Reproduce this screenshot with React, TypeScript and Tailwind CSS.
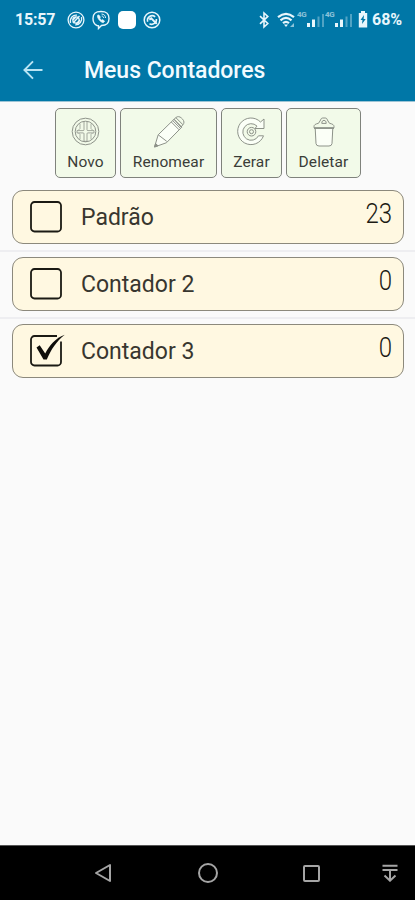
import React from 'react';

function StatusBar() {
  return (
    <div className="flex h-[39px] items-center pl-[15px] pr-[13px] text-[#e8f6fc]">
      <span className="w-[52px] shrink-0 whitespace-nowrap text-[16px] font-bold tracking-[-0.2px]">15:57</span>
      <svg className="h-[18px] w-[18px] shrink-0" viewBox="0 0 18 18" fill="none" stroke="currentColor" strokeWidth="1.3">
        <circle cx="9" cy="9" r="7.9" />
        <path d="M3.5 12C2.5 7 6 3.5 10 4.2M14.5 6c1 4-2 8-6.3 7.8M6 12l6.5-7M6 9l3-3M9 13l4-4" />
        <circle cx="9" cy="9" r="3.2" />
      </svg>
      <svg className="ml-[7px] h-[20px] w-[18px] shrink-0" viewBox="0 0 18 20" fill="none" stroke="currentColor" strokeWidth="1.4">
        <path d="M5 15.5C1.5 14 1 12 1 8.5C1 3.5 3 1.5 9 1.5s8 2 8 7s-2 7-7.5 7L6.5 18.5V15.8Z" />
        <path d="M5.6 5.2c-1 2 2.2 6.7 5.6 7.6l1.5-1.5-2-1.7-1.2.7-1.7-2 .6-1.2-1.5-2.2Z" fill="currentColor" strokeWidth=".6" />
        <path d="M9.5 4c2.6.1 4 1.7 4 4M9.7 6c1.3.1 1.9.8 1.9 2" strokeWidth="1" />
      </svg>
      <div className="ml-[8px] h-[18px] w-[18px] shrink-0 rounded-[5px] bg-white" />
      <svg className="ml-[7px] h-[18px] w-[18px] shrink-0" viewBox="0 0 18 18" fill="none" stroke="currentColor" strokeWidth="1.5">
        <circle cx="9" cy="9" r="7.8" />
        <path d="M4.7 10.8A4.7 4.7 0 0 1 12.2 5.8M13.4 8A4.7 4.7 0 0 1 6.5 12.7" strokeWidth="1.6" />
        <path d="m6.3 8.6 1.9-1.3 5.6 5.6" strokeWidth="2" />
      </svg>
      <div className="ml-auto flex items-center">
        <svg className="h-[18px] w-[12px]" viewBox="0 0 12 18" fill="none" stroke="currentColor" strokeWidth="1.6">
          <path d="m2 5.2 7.8 7.3L6 16V2l3.8 3.4L2 12.8" />
        </svg>
        <svg className="ml-[7px] h-[20px] w-[20px]" viewBox="0 0 20 20" fill="none" stroke="currentColor" strokeWidth="2.2">
          <path d="M1 7.2Q9 .5 17 7.2M3.5 10.3q5.5-4.7 11 0M6 13.2q3-2.6 6 0" />
          <path d="m7 14.5 2 2.5 2-2.5Z" fill="currentColor" stroke="none" />
          <path d="m13 17 4-4v4Z" fill="currentColor" stroke="none" opacity=".6" />
        </svg>
        <Signal />
        <Signal />
        <svg className="ml-[5px] h-[17px] w-[10px]" viewBox="0 0 10 17">
          <path d="M3 0h4v2h2.2v14.5H.8V2H3Z" fill="currentColor" />
          <path d="m6 4-3.5 5h2L4 13l3.7-5H5.6Z" fill="#0077a7" />
        </svg>
        <span className="ml-[4px] whitespace-nowrap text-[16px] font-bold tracking-[-0.1px]">68%</span>
      </div>
    </div>
  );
}

function Signal() {
  return (
    <div className="flex h-[20px] w-[28px] items-start">
      <span className="w-[10px] whitespace-nowrap text-[8px] font-bold leading-[9px] tracking-[-0.4px] opacity-60">4G</span>
      <svg className="h-[18px] w-[18px]" viewBox="0 0 18 18" fill="currentColor">
        <path d="M0 13h3v4H0zM5 9.5h3V17H5z" />
        <path d="M10.5 6.5h2V17h-2zM15 4h2v13h-2z" opacity=".35" />
      </svg>
    </div>
  );
}

const line = {
  fill: 'none',
  stroke: '#8d9289',
  strokeWidth: 1,
  strokeLinejoin: 'round' as const,
};

function NewIcon() {
  return (
    <svg className="h-[30px] w-[30px]" viewBox="0 0 30 30" {...line}>
      <circle cx="14.5" cy="14.5" r="13.3" />
      <circle cx="14.5" cy="14.5" r="10.3" />
      <path d="M13 5v7.8c0 .6-.3.8-1 .8H6v2.3h6c.7 0 1 .2 1 .8v7.6h3v-7.6c0-.6.3-.8 1-.8h6v-2.3h-6c-.7 0-1-.2-1-.8V5" strokeWidth=".8" />
      <path d="M9 7v4.5L7.5 13M9 22v-4.5L7.5 16M20 7v4.5l1.5 1.5M20 22v-4.5l1.5-1.5" strokeWidth=".7" />
    </svg>
  );
}

function PencilIcon() {
  return (
    <svg className="h-[32px] w-[32px]" viewBox="0 0 32 32" {...line}>
      <path d="m1.5 31 3.7-12.2L21 3.3l7.8 7.8-15.3 15.6Z" fill="#fbfff7" />
      <path d="m21 3.3 2-1.8c1.6-1.4 3.8-1 5.4.5l1.2 1.2c1.7 1.8 1.8 4 .3 5.5l-1.9 2.4Z" />
      <path d="m18.3 6 7.8 7.8M19.7 4.6l7.8 7.8M23 1.8l7 7" />
      <path d="m5.2 18.8 8.6 6.6" />
      <path d="m1.5 31 1.1-3.4 2.4 2.2Z" fill="#8d9289" />
    </svg>
  );
}

function ResetIcon() {
  return (
    <svg className="h-[30px] w-[30px]" viewBox="0 0 30 30" {...line}>
      <path d="M27 2v9.5h-9l2-2.4A8.3 8.3 0 1 0 21.5 18.8h5A13.3 13.3 0 1 1 23.5 5Z" fill="#fbfff7" />
      <circle cx="14.5" cy="14.7" r="4.3" />
      <circle cx="14.5" cy="14.7" r="2" />
    </svg>
  );
}

function TrashIcon() {
  return (
    <svg className="h-[30px] w-[24px]" viewBox="0 0 24 30" {...line}>
      <path d="m3.2 11 .8 15.5Q4.3 29 7 29h10q2.7 0 3-2.5L20.8 11" fill="#fbfff7" />
      <path d="M2 10.8V9.5c0-1.6 1.4-2.6 4.5-3.2L8.6 3c.4-1.4 1-2 2.2-2h2.4c1.2 0 1.8.6 2.2 2l2.1 3.3c3.1.6 4.5 1.6 4.5 3.2v1.3Z" />
      <path d="M2 11.2h20" strokeWidth="1.5" />
      <path d="M9.8 6.4c0-2 .7-3 2.2-3s2.2 1 2.2 3Z" />
    </svg>
  );
}

function ToolButton({ label, width, children }: { label: string; width: string; children: React.ReactNode }) {
  return (
    <button className={`flex h-[70px] flex-col items-center rounded-[5px] border border-[#7f827c] bg-[#f2fae9] ${width}`}>
      <span className="flex h-[45px] shrink-0 items-center justify-center pt-[1px]">{children}</span>
      <span className="whitespace-nowrap text-[15.5px] leading-[17px] tracking-[0.1px] text-[#3a3d38]">{label}</span>
    </button>
  );
}

function CheckBox({ checked }: { checked: boolean }) {
  return (
    <svg className="h-[36px] w-[38px] shrink-0" viewBox="0 0 38 36" fill="none">
      <rect x="2" y="3" width="30" height="29.5" rx="3.5" stroke="#1b1a14" strokeWidth="1.8" />
      {checked && (
        <>
          <path d="M28 3h4v5.5" stroke="#fff8e1" strokeWidth="3" />
          <path d="m7.5 14.5 3.2-2.2 5.5 8.2C20.5 12.5 26 5.5 35.8 1.8c-8.5 6.6-13.8 15-18 24.7h-3.3Z" fill="#0e0d0a" />
        </>
      )}
    </svg>
  );
}

function CounterRow({ name, value, checked = false }: { name: string; value: number; checked?: boolean }) {
  return (
    <div className="h-[67px] border-b-2 border-[#eeeef1] pl-[12px] pr-[11px] pt-[5px] last:border-b-0">
      <div className="flex h-[54px] items-center rounded-[11px] border border-[#8c897c] bg-[#fff8e1] pl-[16px] pr-[11px]">
        <CheckBox checked={checked} />
        <span className="ml-[14px] whitespace-nowrap pt-[2px] text-[23px] text-[#38362f]">{name}</span>
        <span className="mb-[6px] ml-auto origin-right scale-y-115 text-[24px] font-light leading-[28px] text-[#1c1b14]">{value}</span>
      </div>
    </div>
  );
}

function NavBar() {
  return (
    <div className="flex h-[55px] items-center border-t border-[#555] bg-black text-[#a5a5a5]">
      <svg className="ml-[94px] h-[20px] w-[18px]" viewBox="0 0 18 20" fill="none" stroke="currentColor" strokeWidth="2" strokeLinejoin="round">
        <path d="M2 10 16 2v16Z" />
      </svg>
      <div className="ml-[86px] h-[20px] w-[20px] rounded-full border-2 border-current" />
      <div className="ml-[85px] h-[17px] w-[17px] rounded-[2px] border-2 border-current" />
      <svg className="ml-[62px] h-[18px] w-[16px]" viewBox="0 0 16 18" fill="none" stroke="currentColor" strokeWidth="2">
        <path d="M.5 1.7h15M.5 6h15M8 7v10M2.5 11.5 8 16.7l5.5-5.2" />
      </svg>
    </div>
  );
}

export default function App() {
  return (
    <div className="flex h-[900px] w-[415px] flex-col overflow-hidden bg-[#fafafa] font-['Roboto',sans-serif]">
      <header className="h-[102px] border-b border-[#9cc4d5] bg-[#0077a7]">
        <StatusBar />
        <div className="flex h-[62px] items-center pl-[23px]">
          <svg className="h-[20px] w-[20px]" viewBox="0 0 20 20" fill="none" stroke="#b9e4f3" strokeWidth="1.9">
            <path d="M19.5 10H2M10 1.3 1.4 10 10 18.7" />
          </svg>
          <h1 className="ml-[41px] whitespace-nowrap pt-[3px] text-[23px] font-medium tracking-[-0.03px] text-[#f2fbff]">Meus Contadores</h1>
        </div>
      </header>
      <div className="flex h-[83px] items-start gap-[4px] pl-[55px] pt-[6px]">
        <ToolButton label="Novo" width="w-[61px]"><NewIcon /></ToolButton>
        <ToolButton label="Renomear" width="w-[97px]"><PencilIcon /></ToolButton>
        <ToolButton label="Zerar" width="w-[61px]"><ResetIcon /></ToolButton>
        <ToolButton label="Deletar" width="w-[75px]"><TrashIcon /></ToolButton>
      </div>
      <main className="flex-1">
        <CounterRow name="Padrão" value={23} />
        <CounterRow name="Contador 2" value={0} />
        <CounterRow name="Contador 3" value={0} checked />
      </main>
      <NavBar />
    </div>
  );
}
